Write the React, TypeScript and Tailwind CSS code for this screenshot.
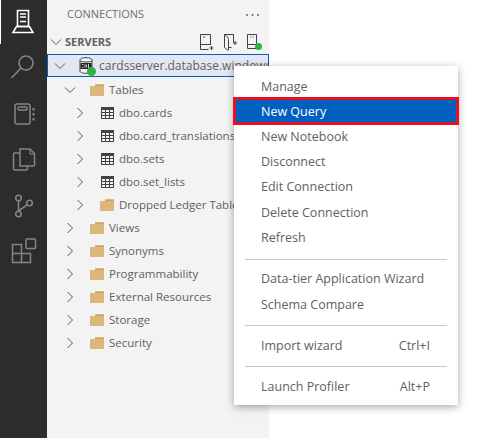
import React from "react";

const font = { fontFamily: '"Open Sans", "Noto Sans", sans-serif' };

function Chevron({ open, className = "" }: { open?: boolean; className?: string }) {
  return (
    <svg width="16" height="16" viewBox="0 0 16 16" fill="none" stroke="#5a5a5a" strokeWidth="1" className={className}>
      {open ? <path d="M3 5.5l5 5 5-5" /> : <path d="M5.5 3l5 5-5 5" />}
    </svg>
  );
}

function Folder() {
  return (
    <svg width="14" height="12" viewBox="0 0 14 12" className="shrink-0">
      <path d="M0 2h5V0h8a1 1 0 0 1 1 1v10a1 1 0 0 1-1 1H0z" fill="#dcb67a" />
      <path d="M5.5 1h8v1h-8z" fill="#c9a263" />
    </svg>
  );
}

function TableIcon() {
  return (
    <svg width="13" height="12" viewBox="0 0 13 12" className="shrink-0">
      <path d="M0 0h13v12H0z" fill="#424242" />
      <g fill="#f3f3f3">
        <path d="M1 3h3v2H1zM5 3h3v2H5zM9 3h3v2H9zM1 6h3v2H1zM5 6h3v2H5zM9 6h3v2H9zM1 9h3v2H1zM5 9h3v2H5zM9 9h3v2H9z" />
      </g>
    </svg>
  );
}

function Row({ indent, open, icon, label }: { indent: string; open?: boolean; icon: React.ReactNode; label: string }) {
  return (
    <div className={`flex h-[23px] items-center overflow-hidden ${indent}`}>
      <Chevron open={open} className="shrink-0" />
      <span className="ml-[12px] flex w-[14px] shrink-0 justify-center">{icon}</span>
      <span className="ml-[5px] whitespace-nowrap text-[11.5px] text-[#616161]">{label}</span>
    </div>
  );
}

function MenuItem({ label, shortcut, active }: { label: string; shortcut?: string; active?: boolean }) {
  return (
    <div className={active
      ? "-mx-px -mt-[3.4px] -mb-[0.7px] flex h-[28px] items-center justify-between border-[3px] border-[#e81123] bg-[#0060c0] pl-[25px] pr-[25px] pt-[3px] text-white"
      : "flex h-[25.4px] items-center justify-between pl-[27px] pr-[28px] text-[#616161]"}>
      <span>{label}</span>
      {shortcut && <span>{shortcut}</span>}
    </div>
  );
}

function Sep() {
  return <div className="mx-[11px] my-[7.3px] h-px bg-[#c8c8c8]" />;
}

export default function App() {
  return (
    <div className="relative flex h-[438px] w-[497px] overflow-hidden bg-white" style={font}>
      <aside className="flex h-full w-[47px] shrink-0 flex-col items-center bg-[#2c2c2c] pt-[9px]">
        <div className="absolute left-0 top-0 h-[44px] w-[1px] bg-white" />
        <svg width="24" height="25" viewBox="0 0 24 25" fill="none" className="ml-[-1px]">
          <path d="M6.5 1.5h11v16h-11z" stroke="#fff" strokeWidth="1.6" />
          <path d="M9 5h6M9 8h6M9 12.5h6" stroke="#fff" strokeWidth="1.6" />
          <path d="M5.5 17.5h13l3.5 6H2z" stroke="#fff" strokeWidth="1.6" />
        </svg>
        <svg width="26" height="26" viewBox="0 0 26 26" fill="none" stroke="#858585" strokeWidth="1.6" className="mt-[20px] ml-[-1px]">
          <circle cx="16" cy="9" r="7" />
          <path d="M11 14L1.5 24" />
        </svg>
        <svg width="22" height="22" viewBox="0 0 22 22" fill="none" stroke="#858585" strokeWidth="1.5" className="mt-[23px] ml-[2px]">
          <rect x="1" y="1" width="15" height="20" rx="2" />
          <rect x="4" y="4" width="9" height="3" rx="1" />
          <path d="M19.5 5v2.5M19.5 10v2.5M19.5 15v2.5" strokeWidth="2" />
        </svg>
        <svg width="24" height="24" viewBox="0 0 24 24" fill="none" stroke="#858585" strokeWidth="1.5" className="mt-[23px]">
          <path d="M8 5H2.5a1 1 0 0 0-1 1v15a1 1 0 0 0 1 1h12a1 1 0 0 0 1-1v-3" />
          <path d="M8 1h10l4.5 4.5V17a1 1 0 0 1-1 1H8z" />
          <path d="M18 1v5h4.5" strokeWidth="1" />
        </svg>
        <svg width="20" height="24" viewBox="0 0 20 24" fill="none" stroke="#858585" strokeWidth="1.5" className="mt-[22px]">
          <circle cx="4.5" cy="4" r="2.8" />
          <circle cx="4.5" cy="20" r="2.8" />
          <circle cx="15.5" cy="9" r="2.8" />
          <path d="M4.5 7v10M13 10.500c-2 3-6 3.500-8 6.500" />
        </svg>
        <svg width="26" height="26" viewBox="0 0 26 26" fill="none" stroke="#858585" strokeWidth="1.5" className="mt-[20px]">
          <path d="M1.500 6.500h9v9h-9zM1.500 15.500h9v9h-9zM10.500 15.500h9v9h-9z" />
          <rect x="15" y="1" width="9.500" height="9.500" rx="1" />
        </svg>
      </aside>

      <section className="h-full w-[222px] shrink-0 bg-[#f3f3f3]">
        <div className="flex h-[30px] items-center justify-between pb-[2px] pl-[20px] pr-[8px]">
          <span className="text-[11px] text-[#6f6f6f]">CONNECTIONS</span>
          <svg width="16" height="4" viewBox="0 0 16 4" fill="#616161" className="mt-[1px]">
            <circle cx="2" cy="2" r="1" /><circle cx="7.500" cy="2" r="1" /><circle cx="13" cy="2" r="1" />
          </svg>
        </div>
        <div className="flex h-[24px] items-center">
          <Chevron open className="ml-[1px] shrink-0" />
          <span className="ml-[1px] text-[11px] font-bold text-[#616161]">SERVERS</span>
          <div className="ml-auto flex items-center">
            <svg width="16" height="18" viewBox="0 0 16 18" fill="none" stroke="#424242" className="mr-[8px]">
              <path d="M11.500 12V1.500h-10v15h8" />
              <path d="M1.500 11.500h10M4 4h2" />
              <path d="M12.500 13v4M10.500 15h4" />
            </svg>
            <svg width="16" height="18" viewBox="0 0 16 18" fill="none" stroke="#424242" className="mr-[7px]">
              <path d="M1.500 1.500h9v8M1.500 1.500v13l3 2.500h1V6.500C5.500 5 4 3 1.500 1.500z" />
              <path d="M5.500 14.500h3" />
              <path d="M12 8v4M10 10h4" />
            </svg>
            <span className="relative mr-[7px] block h-[18px] w-[16px]">
              <svg width="12" height="17" viewBox="0 0 12 17" fill="none" stroke="#424242">
                <path d="M1.500 1.500h9v14h-9zM1.500 11.500h9M4 4h1M6.500 4h1" />
              </svg>
              <span className="absolute bottom-[1px] right-0 h-[7px] w-[7px] rounded-full bg-[#2fb344]" />
            </span>
          </div>
        </div>
        <div className="box-border flex h-[23px] items-center overflow-hidden border border-[#0060c0] bg-[#e4e6f1] pl-[4px]">
          <Chevron open className="shrink-0" />
          <span className="relative ml-[11px] block h-[17px] w-[14px] shrink-0">
            <svg width="14" height="17" viewBox="0 0 14 17">
              <path d="M1 3C1 1.500 3.700.7 7 .7s6 .8 6 2.300v11c0 1.500-2.700 2.300-6 2.300S1 15.500 1 14z" fill="#f3f3f3" stroke="#424242" />
              <path d="M1 4c1.500 1.300 10.500 1.300 12 0" stroke="#424242" fill="none" />
              <rect x="1.500" y="6" width="11" height="6" fill="#222" />
              <path d="M3 7.500h1.500M3 10.500h1.500M6 7.500v3M7.500 7.500v3M9.500 7v4" stroke="#fff" strokeWidth=".8" />
            </svg>
            <span className="absolute -bottom-[2px] -right-[3px] h-[9px] w-[9px] rounded-full bg-[#2fb344]" />
          </span>
          <span className="ml-[6px] whitespace-nowrap text-[12px] text-[#616161]">cardsserver.database.windows.net</span>
        </div>
        <div className="mt-[1px]">
          <Row indent="pl-[15px]" open icon={<Folder />} label="Tables" />
          <Row indent="pl-[25px]" icon={<TableIcon />} label="dbo.cards" />
          <Row indent="pl-[25px]" icon={<TableIcon />} label="dbo.card_translations" />
          <Row indent="pl-[25px]" icon={<TableIcon />} label="dbo.sets" />
          <Row indent="pl-[25px]" icon={<TableIcon />} label="dbo.set_lists" />
          <Row indent="pl-[25px]" icon={<Folder />} label="Dropped Ledger Tables" />
          <Row indent="pl-[15px]" icon={<Folder />} label="Views" />
          <Row indent="pl-[15px]" icon={<Folder />} label="Synonyms" />
          <Row indent="pl-[15px]" icon={<Folder />} label="Programmability" />
          <Row indent="pl-[15px]" icon={<Folder />} label="External Resources" />
          <Row indent="pl-[15px]" icon={<Folder />} label="Storage" />
          <Row indent="pl-[15px]" icon={<Folder />} label="Security" />
        </div>
      </section>

      <div className="absolute left-[234px] top-[66px] w-[224px] bg-white pb-[5px] pt-[9px] text-[12.5px] shadow-[0_2px_8px_rgba(0,0,0,0.35)]">
        <MenuItem label="Manage" />
        <MenuItem label="New Query" active />
        <MenuItem label="New Notebook" />
        <MenuItem label="Disconnect" />
        <MenuItem label="Edit Connection" />
        <MenuItem label="Delete Connection" />
        <MenuItem label="Refresh" />
        <Sep />
        <MenuItem label="Data-tier Application Wizard" />
        <MenuItem label="Schema Compare" />
        <Sep />
        <MenuItem label="Import wizard" shortcut="Ctrl+I" />
        <Sep />
        <MenuItem label="Launch Profiler" shortcut="Alt+P" />
      </div>
    </div>
  );
}
